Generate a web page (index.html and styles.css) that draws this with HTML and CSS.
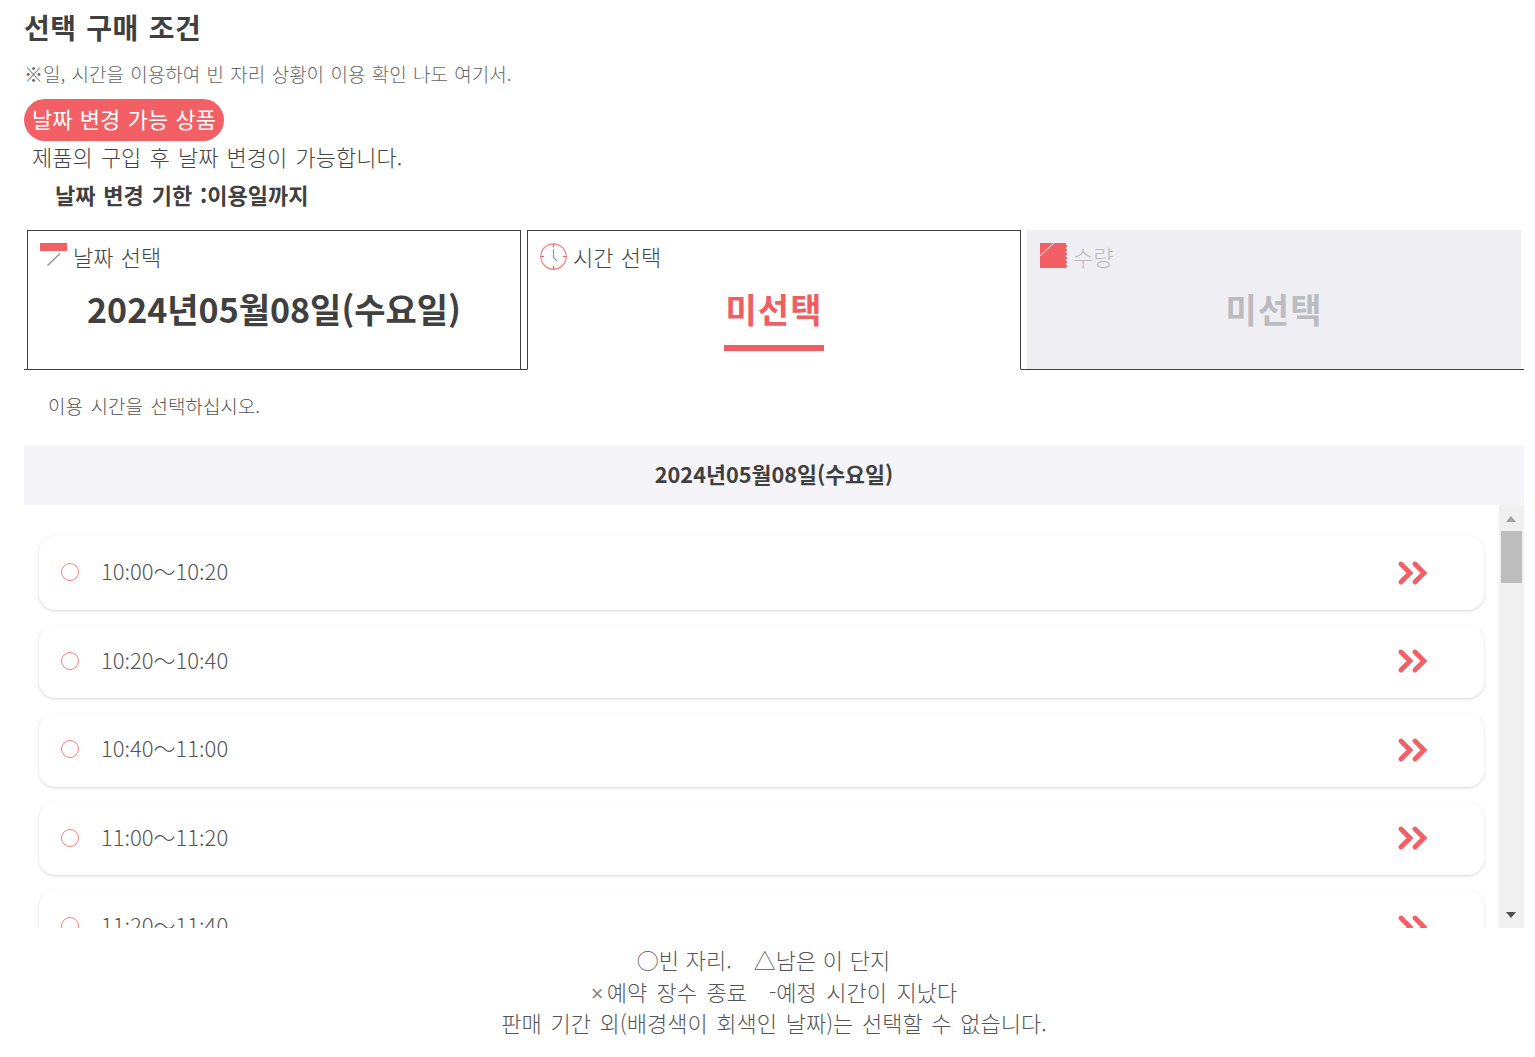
FILE: index.html
```
<!DOCTYPE html>
<html lang="ko">
<head>
<meta charset="utf-8">
<title>선택 구매 조건</title>
<link rel="stylesheet" href="styles.css">
</head>
<body>
<main class="page">
  <h1 class="title">선택 구매 조건</h1>
  <p class="note">※일, 시간을 이용하여 빈 자리 상황이 이용 확인 나도 여기서.</p>
  <div class="badge-row"><span class="badge">날짜 변경 가능 상품</span></div>
  <p class="desc">제품의 구입 후 날짜 변경이 가능합니다.</p>
  <p class="limit">날짜 변경 기한 :이용일까지</p>

  <div class="tabs">
    <section class="tab tab-done">
      <div class="tab-head">
        <svg class="tab-icon" viewBox="0 0 27 27" aria-hidden="true"><rect x="0" y="0" width="27" height="8" fill="#f26065"/><path d="M7.500 22.500 L20 10.500" stroke="#8e8e8e" stroke-width="1.300" fill="none"/></svg>
        <span>날짜 선택</span>
      </div>
      <div class="tab-value">2024년05월08일(수요일)</div>
    </section>
    <section class="tab tab-active">
      <div class="tab-head">
        <svg class="tab-icon" viewBox="0 0 27 27" aria-hidden="true"><circle cx="13.500" cy="13.500" r="12.700" fill="none" stroke="#f58085" stroke-width="1.200"/><path d="M13.500 0.500V4M13.500 23V26.500M0.500 13.500H4M23 13.500H26.500" stroke="#f26065" stroke-width="1.200"/><path d="M13.500 6V14.500L17 18" fill="none" stroke="#999" stroke-width="1.200"/></svg>
        <span>시간 선택</span>
      </div>
      <div class="tab-value"><span class="unset">미선택</span></div>
    </section>
    <section class="tab tab-off">
      <div class="tab-head">
        <svg class="tab-icon" viewBox="0 0 27 27" aria-hidden="true"><rect x="0" y="0" width="27" height="25" fill="#f26065"/><path d="M0 13L14 0" stroke="#fff" stroke-width="1"/><path d="M26.500 0V25" stroke="#eeeef3" stroke-width="1.200" stroke-dasharray="2 2"/></svg>
        <span>수량</span>
      </div>
      <div class="tab-value">미선택</div>
    </section>
  </div>

  <p class="prompt">이용 시간을 선택하십시오.</p>
  <div class="date-bar">2024년05월08일(수요일)</div>

  <div class="slots">
    <div class="slot-list">
      <div class="slot"><span class="ring"></span><span class="time">10:00～10:20</span><svg class="go" viewBox="0 0 30 24" aria-hidden="true"><path d="M3 3L12 12L3 21M17 3L26 12L17 21" fill="none" stroke="#f26065" stroke-width="4.800" stroke-linecap="round" stroke-linejoin="miter"/></svg></div>
      <div class="slot"><span class="ring"></span><span class="time">10:20～10:40</span><svg class="go" viewBox="0 0 30 24" aria-hidden="true"><path d="M3 3L12 12L3 21M17 3L26 12L17 21" fill="none" stroke="#f26065" stroke-width="4.800" stroke-linecap="round" stroke-linejoin="miter"/></svg></div>
      <div class="slot"><span class="ring"></span><span class="time">10:40～11:00</span><svg class="go" viewBox="0 0 30 24" aria-hidden="true"><path d="M3 3L12 12L3 21M17 3L26 12L17 21" fill="none" stroke="#f26065" stroke-width="4.800" stroke-linecap="round" stroke-linejoin="miter"/></svg></div>
      <div class="slot"><span class="ring"></span><span class="time">11:00～11:20</span><svg class="go" viewBox="0 0 30 24" aria-hidden="true"><path d="M3 3L12 12L3 21M17 3L26 12L17 21" fill="none" stroke="#f26065" stroke-width="4.800" stroke-linecap="round" stroke-linejoin="miter"/></svg></div>
      <div class="slot"><span class="ring"></span><span class="time">11:20～11:40</span><svg class="go" viewBox="0 0 30 24" aria-hidden="true"><path d="M3 3L12 12L3 21M17 3L26 12L17 21" fill="none" stroke="#f26065" stroke-width="4.800" stroke-linecap="round" stroke-linejoin="miter"/></svg></div>
    </div>
    <div class="scrollbar">
      <span class="arrow-up"></span>
      <span class="thumb"></span>
      <span class="arrow-down"></span>
    </div>
  </div>

  <div class="legend">
    <p class="legend-first">○빈 자리.　△남은 이 단지</p>
    <p class="legend-second"><span class="times">×</span>예약 장수 종료　-예정 시간이 지났다</p>
    <p>판매 기간 외(배경색이 회색인 날짜)는 선택할 수 없습니다.</p>
  </div>
</main>
</body>
</html>
```

FILE: styles.css
```
* { box-sizing: border-box; }
html, body { margin: 0; padding: 0; background: #fff; }
body {
  font-family: "Noto Sans CJK KR", "Noto Sans", sans-serif;
  color: #444;
  height: 1057px;
  overflow: hidden;
}
p, h1 { margin: 0; }
.page { width: 1500px; margin-left: 24px; }

.title { font-size: 28px; line-height: 40px; padding-top: 7px; height: 48px; font-weight: 700; color: #404040; letter-spacing: 0.500px; word-spacing: 1.500px; }
.note { margin-top: 14px; font-size: 19px; line-height: 24px; color: #666; word-spacing: 1px; font-weight: 300; }
.badge-row { margin-top: 13px; height: 42px; }
.badge {
  display: inline-block;
  height: 42px;
  padding: 0 8px;
  line-height: 38px;
  border-radius: 21px;
  background: #f26065;
  color: #fff;
  font-size: 22px;
  word-spacing: 1.200px;
}
.desc { padding-left: 8px; font-size: 22px; line-height: 30px; color: #444; word-spacing: 2px; font-weight: 300; }
.limit { padding-left: 31px; margin-top: 8px; font-size: 22px; line-height: 30px; font-weight: 700; color: #404040; word-spacing: 1.700px; }

.tabs {
  margin-top: 21px;
  height: 140px;
  padding: 0 3px;
  display: flex;
  gap: 6px;
  border-bottom: 1px solid #404040;
}
.tab { width: 494px; height: 140px; padding: 12px 12px 0; }
.tab-done { border: 1px solid #404040; }
.tab-active { border: 1px solid #404040; border-bottom: 1px solid #fff; }
.tab-off { background: #eeeef3; height: 139px; padding: 13px 13px 0; color: #bbbbc2; }
.tab-head { display: flex; align-items: flex-start; gap: 6px; height: 28px; font-size: 22px; line-height: 27px; word-spacing: 1px; font-weight: 300; }
.tab-icon { width: 27px; height: 27px; flex: none; }
.tab-value {
  margin-top: 16px;
  text-align: center;
  font-size: 34px;
  line-height: 44px;
  font-weight: 700;
  color: #404040;
}
.tab-off .tab-value { color: #bbbbc2; letter-spacing: 1px; }
.unset {
  display: inline-block;
  color: #ee5f64;
  height: 64px;
  padding: 0 1.500px;
  letter-spacing: 1px;
  border-bottom: 6px solid #ee5f64;
}

.prompt { padding-left: 24px; margin-top: 23px; font-size: 19px; line-height: 26px; color: #555; word-spacing: 2.200px; font-weight: 300; }
.date-bar {
  margin-top: 26px;
  height: 60px;
  background: #f4f4f9;
  text-align: center;
  font-size: 21.700px;
  line-height: 57px;
  font-weight: 700;
  color: #404040;
}

.slots { position: relative; height: 423px; overflow: hidden; }
.slot-list { padding: 31px 40px 0 15px; display: flex; flex-direction: column; gap: 15px; }
.slot {
  height: 73.500px;
  flex: none;
  display: flex;
  align-items: center;
  padding: 0 56px 0 22px;
  background: #fff;
  border-radius: 16px;
  box-shadow: 0 1px 3px rgba(0, 0, 0, 0.160);
}
.ring { width: 18px; height: 18px; border: 1px solid #f58085; border-radius: 50%; flex: none; margin-bottom: 1px; }
.time { margin-left: 22px; flex: 1; padding-bottom: 5px; font-family: "Noto Sans CJK JP", sans-serif; font-size: 22px; font-weight: 300; color: #555; }
.go { width: 30px; height: 24px; flex: none; }

.scrollbar { position: absolute; top: 0; right: 0; width: 25px; height: 423px; background: #f0f0f0; }
.thumb { position: absolute; left: 2px; top: 26px; width: 21px; height: 52px; background: #bdbdbd; }
.arrow-up, .arrow-down { position: absolute; left: 7px; width: 0; height: 0; border-left: 5.500px solid transparent; border-right: 5.500px solid transparent; }
.arrow-up { top: 11px; border-bottom: 6px solid #a3a3a3; }
.arrow-down { bottom: 10px; border-top: 6px solid #505050; }

.legend { margin-top: 16px; text-align: center; font-size: 22px; line-height: 31.500px; color: #555; font-weight: 300; word-spacing: 2.500px; }
.legend-first { padding-right: 21px; word-spacing: 0.500px; }
.legend-second { word-spacing: 3.300px; }
.times { font-family: "Liberation Sans", sans-serif; line-height: 0; padding-right: 3px; color: #888; }
```
